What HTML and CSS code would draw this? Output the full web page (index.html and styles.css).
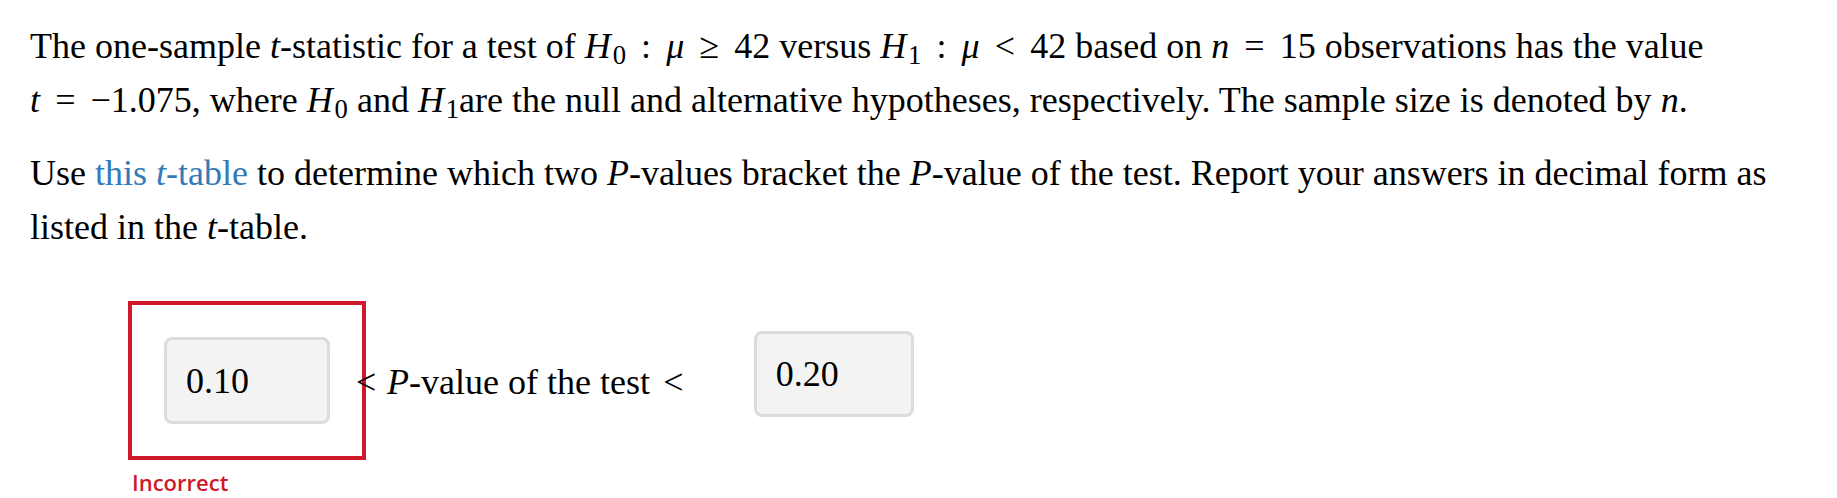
FILE: index.html
```html
<!DOCTYPE html>
<html lang="en">
<head>
<meta charset="utf-8">
<title>One-sample t-test P-value</title>
<link rel="stylesheet" href="styles.css">
</head>
<body>
<main class="question">
  <p class="prompt">The one-sample <i class="mi">t</i>-statistic for a test of <span class="math"><i class="mi mi-wide">H</i><sub class="sub">0</sub><span class="rel">:</span><i class="mi">μ</i><span class="rel">≥</span>42</span> versus <span class="math"><i class="mi mi-wide">H</i><sub class="sub">1</sub><span class="rel">:</span><i class="mi">μ</i><span class="rel">&lt;</span>42</span> based on <span class="math"><i class="mi">n</i><span class="rel">=</span>15</span> observations has the value <span class="math"><i class="mi">t</i><span class="rel">=</span>−1.075</span>, where <span class="math"><i class="mi mi-wide">H</i><sub class="sub">0</sub></span> and <span class="math"><i class="mi mi-wide">H</i><sub class="sub">1</sub></span>are the null and alternative hypotheses, respectively. The sample size is denoted by <i class="mi">n</i>.</p>
  <p class="prompt">Use <a class="link" href="#">this <i class="mi">t</i>-table</a> to determine which two <i class="mi">P</i>-values bracket the <i class="mi">P</i>-value of the test. Report your answers in decimal form as listed in the <i class="mi">t</i>-table.</p>

  <div class="answer-row">
    <div class="field-group">
      <div class="field is-incorrect">
        <input class="answer-box" type="text" value="0.10" aria-label="Lower bound">
      </div>
      <span class="feedback">Incorrect</span>
    </div>
    <span class="relation-text"><span class="rel-lead">&lt;</span><i class="mi">P</i>-value of the test <span class="rel-tail">&lt;</span></span>
    <div class="field field-upper">
      <input class="answer-box" type="text" value="0.20" aria-label="Upper bound">
    </div>
  </div>
</main>
</body>
</html>
```

FILE: styles.css
```css
html, body {
  margin: 0;
  padding: 0;
  background: #ffffff;
}

body {
  font-family: "Liberation Serif", "Times New Roman", serif;
  font-size: 36px;
  color: #000000;
}

.question {
  padding: 19px 30px 10px 30px;
}

.prompt {
  margin: 0 0 19px 0;
  line-height: 54px;
}

.prompt:last-of-type {
  margin-bottom: 0;
}

.mi {
  font-style: italic;
}

.mi-wide {
  margin-right: 0.05em;
}

.math {
  white-space: nowrap;
}

.sub {
  font-size: 74%;
  vertical-align: -0.22em;
  line-height: 0;
}

.rel {
  margin: 0 0.42em;
}

.link {
  color: #337ab7;
  text-decoration: none;
}

.answer-row {
  display: flex;
  align-items: flex-start;
  margin-top: 47px;
  padding-left: 98px;
}

.field-group {
  display: flex;
  flex-direction: column;
  align-items: flex-start;
}

.is-incorrect {
  border: 4px solid #d0182b;
  padding: 32px;
}

.feedback {
  margin: 7px 0 0 4px;
  font-family: "Open Sans", "Liberation Sans", sans-serif;
  font-weight: 600;
  font-size: 22px;
  line-height: 30px;
  color: #d0182b;
  white-space: nowrap;
}

.relation-text {
  margin-left: -10px;
  margin-top: 54px;
  line-height: 54px;
  white-space: nowrap;
  font-size: 36px;
}

.rel-lead {
  margin-right: 0.3em;
}

.rel-tail {
  margin-left: 0.12em;
}

.field-upper {
  margin-left: 70px;
  margin-top: 30px;
}

.answer-box {
  box-sizing: border-box;
  display: block;
  width: 166px;
  height: 87px;
  margin: 0;
  padding: 0 19px;
  border: 3px solid #dcdcdc;
  border-radius: 8px;
  background: #f3f3f3;
  font-family: "Liberation Serif", "Times New Roman", serif;
  font-size: 36px;
  color: #000000;
  outline: none;
}

.field-upper .answer-box {
  width: 160px;
  height: 86px;
}
```
